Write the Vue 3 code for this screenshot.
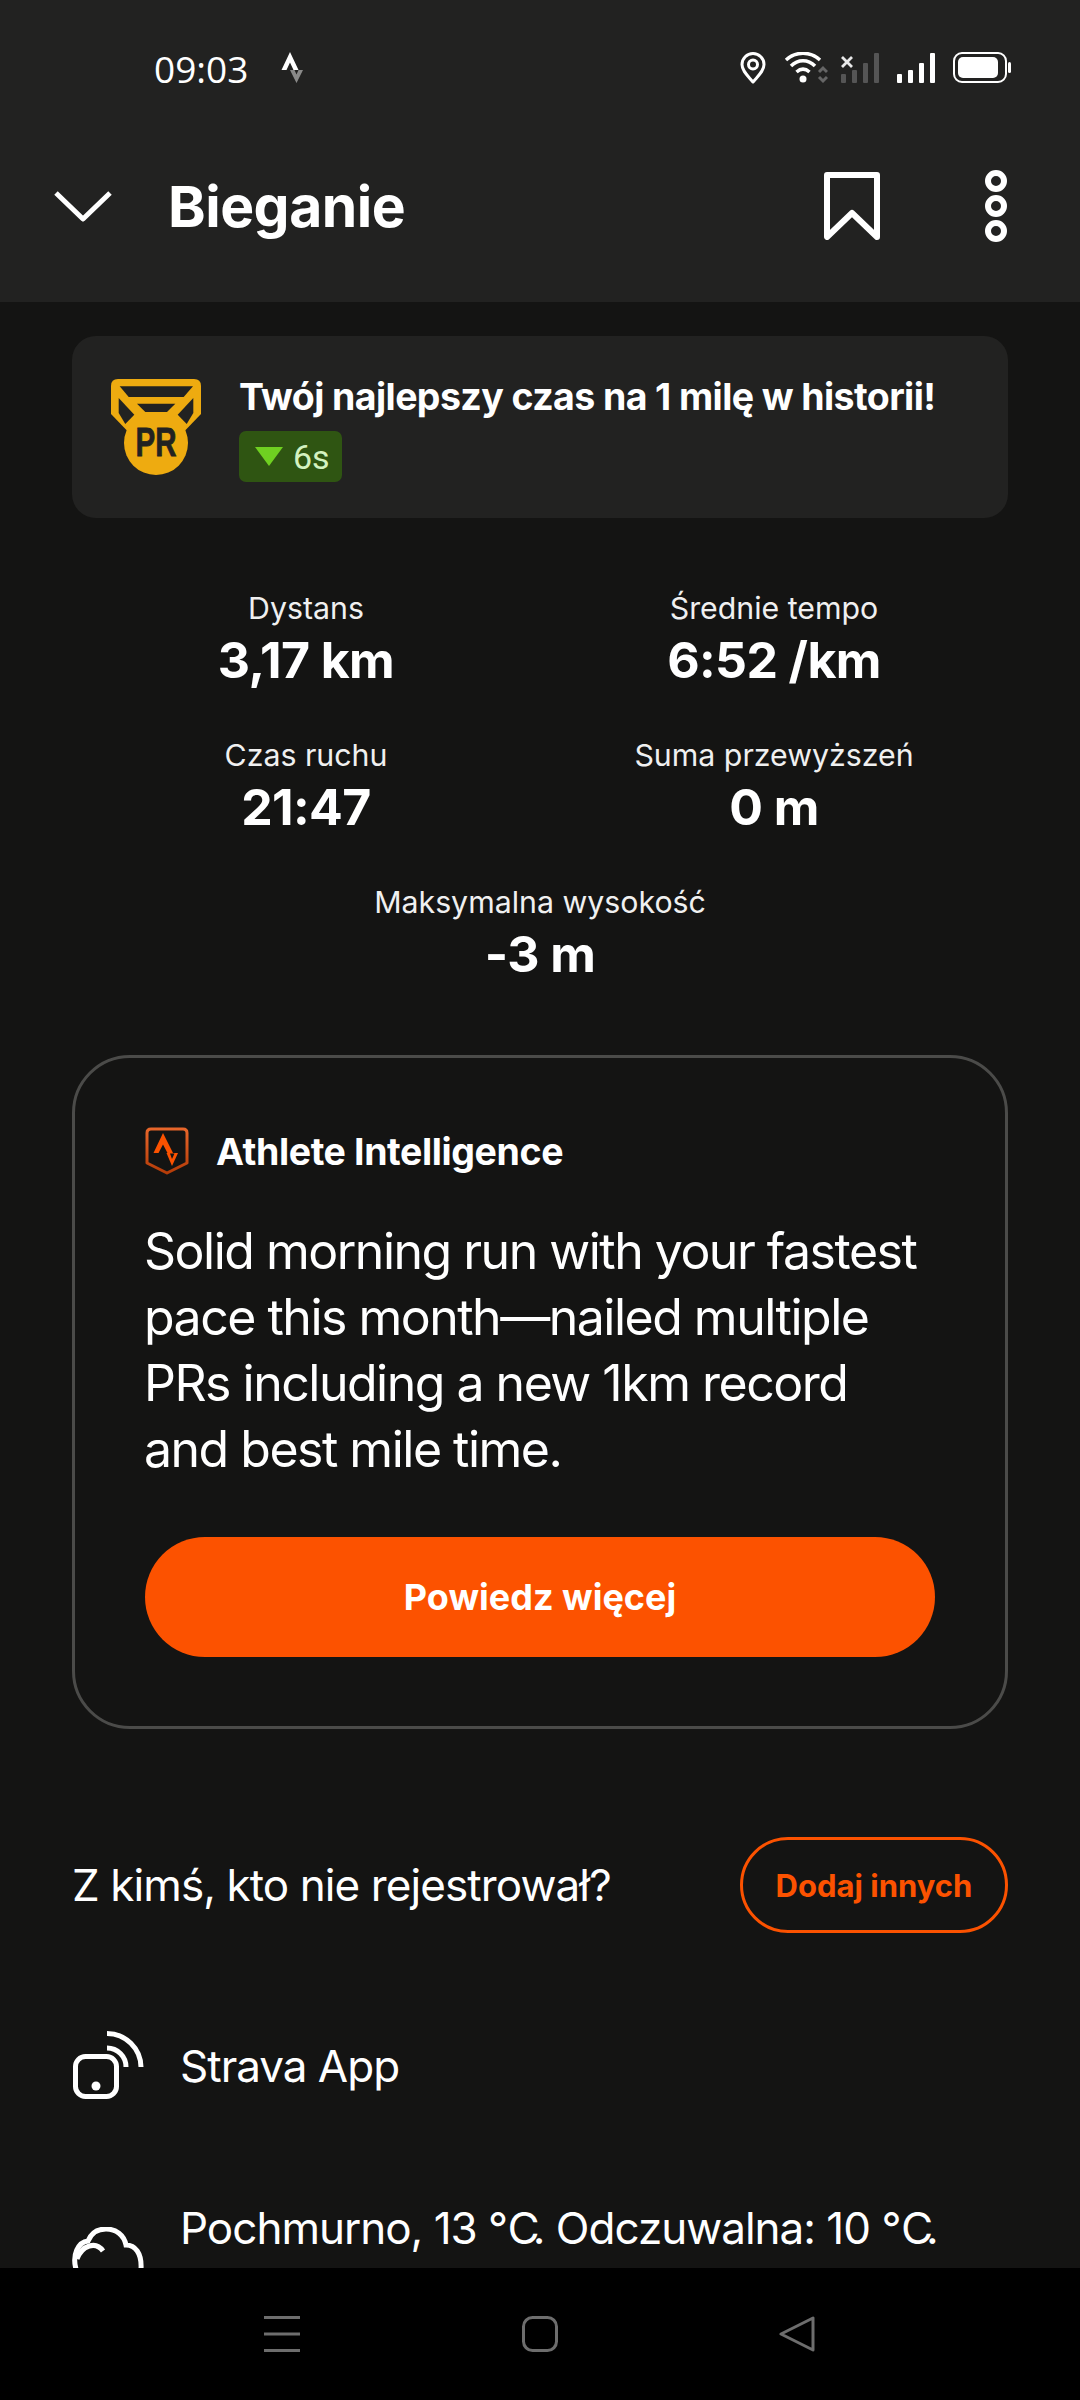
<template>
  <div class="screen">
    <header class="top">
      <div class="status">
        <div class="status-left">
          <span class="clock">09:03</span>
          <svg class="st-logo" width="24" height="34" viewBox="0 0 24 34">
            <path d="M10 1 L18.5 19 H13.5 L10 11.5 L6.5 19 H1.5 Z" fill="#fff" />
            <path d="M10 19 H14.5 L16.5 23.5 L18.5 19 H23 L16.5 32 Z" fill="#8a8a89" />
          </svg>
        </div>
        <div class="status-right">
          <svg width="26" height="32" viewBox="0 0 26 32" fill="none" stroke="#fff" stroke-width="3">
            <path d="M13 30 C8 24 2 19 2 12.500 A11 11 0 0 1 24 12.500 C24 19 18 24 13 30 Z" stroke-linejoin="round" />
            <circle cx="13" cy="12.500" r="4.500" />
          </svg>
          <svg class="wifi" width="44" height="32" viewBox="0 0 44 32" fill="none">
            <path d="M2 8 C12 -1 26 -1 36 8" stroke="#fff" stroke-width="3.500" />
            <path d="M7 14 C14 7 24 7 31 14" stroke="#fff" stroke-width="3.500" />
            <path d="M12.500 20 C17 16 21 16 25.500 20" stroke="#fff" stroke-width="3.500" />
            <circle cx="19" cy="27" r="3.500" fill="#fff" />
            <path d="M35 20 L39 16 L43 20 M35 25 L39 29 L43 25" stroke="#666" stroke-width="3" />
          </svg>
          <svg class="sim" width="40" height="32" viewBox="0 0 40 32">
            <path d="M2 5 L12 15 M12 5 L2 15" stroke="#fff" stroke-width="2.800" opacity=".9" />
            <rect x="1" y="22" width="5" height="9" rx="1" fill="#555" />
            <rect x="12" y="18" width="5" height="13" rx="1" fill="#555" />
            <rect x="23" y="11" width="5" height="20" rx="1" fill="#555" />
            <rect x="34" y="1" width="5" height="30" rx="1" fill="#555" />
          </svg>
          <svg class="sim" width="40" height="32" viewBox="0 0 40 32" fill="#fff">
            <rect x="1" y="22" width="5" height="9" rx="1" />
            <rect x="12" y="18" width="5" height="13" rx="1" />
            <rect x="23" y="11" width="5" height="20" rx="1" />
            <rect x="34" y="1" width="5" height="30" rx="1" />
          </svg>
          <svg class="batt" width="58" height="32" viewBox="0 0 58 32">
            <rect x="1" y="1" width="52" height="29" rx="8" fill="none" stroke="#fff" stroke-width="2" />
            <rect x="5" y="5" width="40" height="21" rx="5" fill="#fff" />
            <rect x="55" y="10" width="3" height="11" rx="1.500" fill="#fff" />
          </svg>
        </div>
      </div>
      <div class="bar">
        <svg class="chev" width="58" height="34" viewBox="0 0 58 34" fill="none">
          <path d="M2 4 L29 30 L56 4" stroke="#fff" stroke-width="5" stroke-linejoin="round" />
        </svg>
        <h1>Bieganie</h1>
        <svg class="bookmark" width="56" height="68" viewBox="0 0 56 68" fill="none">
          <path d="M3 3 H53 V65 L28 41 L3 65 Z" stroke="#fff" stroke-width="6" stroke-linejoin="round" />
        </svg>
        <svg class="dots" width="24" height="72" viewBox="0 0 24 72" fill="none" stroke="#fff" stroke-width="6">
          <circle cx="12" cy="11" r="8" />
          <circle cx="12" cy="36" r="8" />
          <circle cx="12" cy="61" r="8" />
        </svg>
      </div>
    </header>

    <main class="content">
      <section class="pr-card">
        <svg class="medal" width="90" height="96" viewBox="0 0 90 96">
          <path d="M7 0 H83 Q90 0 90 7 V35 L64 62 H26 L0 35 V7 Q0 0 7 0 Z" fill="#eeab10" />
          <circle cx="45" cy="64" r="32" fill="#eeab10" />
          <path d="M8.700 7.300 H82 L72.700 18 H17.700 Z" fill="#222221" />
          <path d="M26 24.700 H64.300 L56 33 H34.300 Z" fill="#222221" />
          <path d="M7.700 19 L23.300 35.700 L14.300 45 L7.700 34 Z" fill="#222221" />
          <path d="M82.300 19 L66.700 35.700 L75.700 45 L82.300 34 Z" fill="#222221" />
          <text x="45" y="77" class="medal-txt" text-anchor="middle" textLength="41" lengthAdjust="spacingAndGlyphs">PR</text>
        </svg>
        <div class="pr-text">
          <p class="pr-title">Twój najlepszy czas na 1 milę w historii!</p>
          <span class="pr-badge"><i class="tri"></i>6s</span>
        </div>
      </section>

      <section class="stats">
        <div v-for="s in stats" :key="s.label" class="stat" :class="{ wide: s.wide }">
          <span class="stat-label">{{ s.label }}</span>
          <strong class="stat-value">{{ s.value }}</strong>
        </div>
      </section>

      <section class="ai-card">
        <div class="ai-head">
          <svg width="44" height="48" viewBox="0 0 44 48" fill="none">
            <defs>
              <linearGradient id="shield" x1="0" y1="0" x2="0" y2="1">
                <stop offset="0" stop-color="#e8662a" />
                <stop offset="1" stop-color="#b53c08" />
              </linearGradient>
            </defs>
            <path d="M6 2 H38 Q42 2 42 6 V36 L22 46 L2 36 V6 Q2 2 6 2 Z" stroke="url(#shield)" stroke-width="3" stroke-linejoin="round" />
            <path d="M18 6 L28 26 H22.500 L18 17.500 L13.500 26 H8.500 Z" fill="#fc5200" />
            <path d="M21.500 26 H33 L27 39 Z" fill="#fc5200" />
            <path d="M25 26.500 H29.500 L27 32 Z" fill="#141413" />
          </svg>
          <span>Athlete Intelligence</span>
        </div>
        <p class="ai-body">Solid morning run with your fastest pace this month—nailed multiple PRs including a new 1km record and best mile time.</p>
        <button class="ai-btn">Powiedz więcej</button>
      </section>

      <section class="with-row">
        <span>Z kimś, kto nie rejestrował?</span>
        <button class="add-btn">Dodaj innych</button>
      </section>

      <section class="info-row">
        <svg width="72" height="70" viewBox="0 0 72 70" fill="none" stroke="#fff" stroke-width="5">
          <rect x="3.500" y="25.500" width="41" height="40" rx="10" />
          <circle cx="24" cy="55" r="4.500" fill="#fff" stroke="none" />
          <path d="M35 17 A19 19 0 0 1 54 36" />
          <path d="M35 2.500 A34 34 0 0 1 69 36" />
        </svg>
        <span>Strava App</span>
      </section>

      <section class="info-row weather">
        <svg width="72" height="42" viewBox="0 0 72 42" fill="none" stroke="#fff" stroke-width="5">
          <path d="M4 42 C0 28 6 15 16 14 C20 4 28 2 34 2 C44 2 52 8 54 18 C63 18 70 26 69 42" />
          <path d="M5 32 C10 18 24 14 31 24" />
        </svg>
        <span>Pochmurno, 13 <span class="deg">℃</span>. Odczuwalna: 10 <span class="deg">℃</span>.</span>
      </section>
    </main>

    <footer class="nav">
      <svg width="36" height="36" viewBox="0 0 36 36" fill="#6d6d6d">
        <rect y="0" width="36" height="3" />
        <rect y="16.500" width="36" height="3" />
        <rect y="33" width="36" height="3" />
      </svg>
      <svg width="36" height="36" viewBox="0 0 36 36" fill="none" stroke="#6d6d6d" stroke-width="3">
        <rect x="1.500" y="1.500" width="33" height="33" rx="9" />
      </svg>
      <svg width="36" height="36" viewBox="0 0 36 36" fill="none" stroke="#6d6d6d" stroke-width="3" stroke-linejoin="round">
        <path d="M2 18 L34 2 V34 Z" />
      </svg>
    </footer>
  </div>
</template>

<script setup>
const stats = [
  { label: 'Dystans', value: '3,17 km' },
  { label: 'Średnie tempo', value: '6:52 /km' },
  { label: 'Czas ruchu', value: '21:47' },
  { label: 'Suma przewyższeń', value: '0 m' },
  { label: 'Maksymalna wysokość', value: '-3 m', wide: true }
]
</script>

<style>
html, body { margin: 0; background: #141413; }
</style>

<style scoped>
.screen {
  width: 1080px;
  height: 2400px;
  display: flex;
  flex-direction: column;
  background: #141413;
  color: #fff;
  font-family: Inter, "Liberation Sans", sans-serif;
  overflow: hidden;
}
.top {
  height: 302px;
  flex: none;
  background: #222221;
}
.status {
  height: 136px;
  padding: 0 69px 0 154px;
  display: flex;
  align-items: center;
  justify-content: space-between;
  box-sizing: border-box;
}
.status-left { display: flex; align-items: center; gap: 32px; }
.clock { font-size: 37px; font-weight: 400; font-family: "Open Sans", sans-serif; }
.status-right { display: flex; align-items: center; }
.wifi { margin-left: 18px; }
.sim { margin-left: 12px; }
.sim + .sim { margin-left: 16px; }
.batt { margin-left: 17px; }
.bar {
  height: 140px;
  display: flex;
  align-items: center;
  padding: 0 72px 0 54px;
}
.bar h1 { margin: 0 0 0 56px; font-size: 57px; font-weight: 700; flex: 1; letter-spacing: -0.5px; }
.bookmark { margin-right: 104px; }
.content {
  flex: 1;
  min-height: 0;
  overflow: hidden;
  padding: 34px 72px 0;
  box-sizing: border-box;
}
.pr-card {
  height: 182px;
  background: #222221;
  border-radius: 24px;
  display: flex;
  align-items: center;
  padding: 0 39px;
  box-sizing: border-box;
  gap: 38px;
}
.medal { flex: none; }
.medal-txt { font-size: 41px; font-weight: 700; fill: #222221; stroke: #222221; stroke-width: 0.8px; font-family: "Liberation Sans", sans-serif; }
.pr-text { padding-top: 2px; }
.pr-title { margin: 0 0 12px; font-size: 37.500px; font-weight: 700; letter-spacing: -0.6px; white-space: nowrap; }
.pr-badge {
  display: inline-flex;
  align-items: center;
  gap: 10px;
  height: 51px;
  padding: 0 12px 0 16px;
  background: #2f5512;
  border-radius: 7px;
  color: #d4f2c0;
  font-size: 34px;
  font-family: Roboto, sans-serif;
}
.tri {
  width: 0;
  height: 0;
  border-left: 14px solid transparent;
  border-right: 14px solid transparent;
  border-top: 19px solid #6fd021;
}
.stats {
  margin-top: 70px;
  display: grid;
  grid-template-columns: 468px 468px;
  row-gap: 40px;
}
.stat { display: flex; flex-direction: column; align-items: center; height: 107px; }
.stat.wide { grid-column: 1 / 3; }
.stat-label { font-size: 30.300px; line-height: 40px; color: #f0f0f0; }
.stat-value { font-size: 50px; line-height: 64px; font-weight: 700; letter-spacing: -0.6px; }
.ai-card {
  margin-top: 66px;
  height: 674px;
  box-sizing: border-box;
  border: 3px solid #4b4b49;
  border-radius: 58px;
  padding: 65px 70px 0;
}
.ai-head { display: flex; align-items: center; gap: 27px; font-size: 37.500px; font-weight: 700; letter-spacing: -0.4px; height: 56px; }
.ai-body { margin: 39px 0 0 -1px; font-size: 50px; line-height: 66px; letter-spacing: -1.5px; }
.ai-btn {
  display: block;
  width: 100%;
  height: 120px;
  margin-top: 55px;
  border: 0;
  border-radius: 60px;
  background: #fc5200;
  color: #fff;
  font: 700 36px Inter, sans-serif;
}
.with-row {
  margin-top: 108px;
  height: 96px;
  display: flex;
  align-items: center;
  justify-content: space-between;
  font-size: 44px;
  letter-spacing: -0.9px;
}
.add-btn {
  width: 268px;
  height: 96px;
  box-sizing: border-box;
  border: 3px solid #fc5200;
  border-radius: 48px;
  background: none;
  color: #fc5200;
  font: 700 31px Inter, sans-serif;
}
.info-row {
  margin-top: 98px;
  height: 70px;
  display: flex;
  align-items: center;
  gap: 36px;
  font-size: 44px;
  letter-spacing: -1px;
}
.weather { margin-top: 100px; align-items: flex-start; height: auto; }
.weather svg { margin-top: 26px; flex: none; }
.deg { font-size: 44px; letter-spacing: -7px; }
.nav {
  height: 132px;
  flex: none;
  background: #000;
  display: flex;
  align-items: center;
  justify-content: space-between;
  padding: 0 265px 0 264px;
}
</style>
